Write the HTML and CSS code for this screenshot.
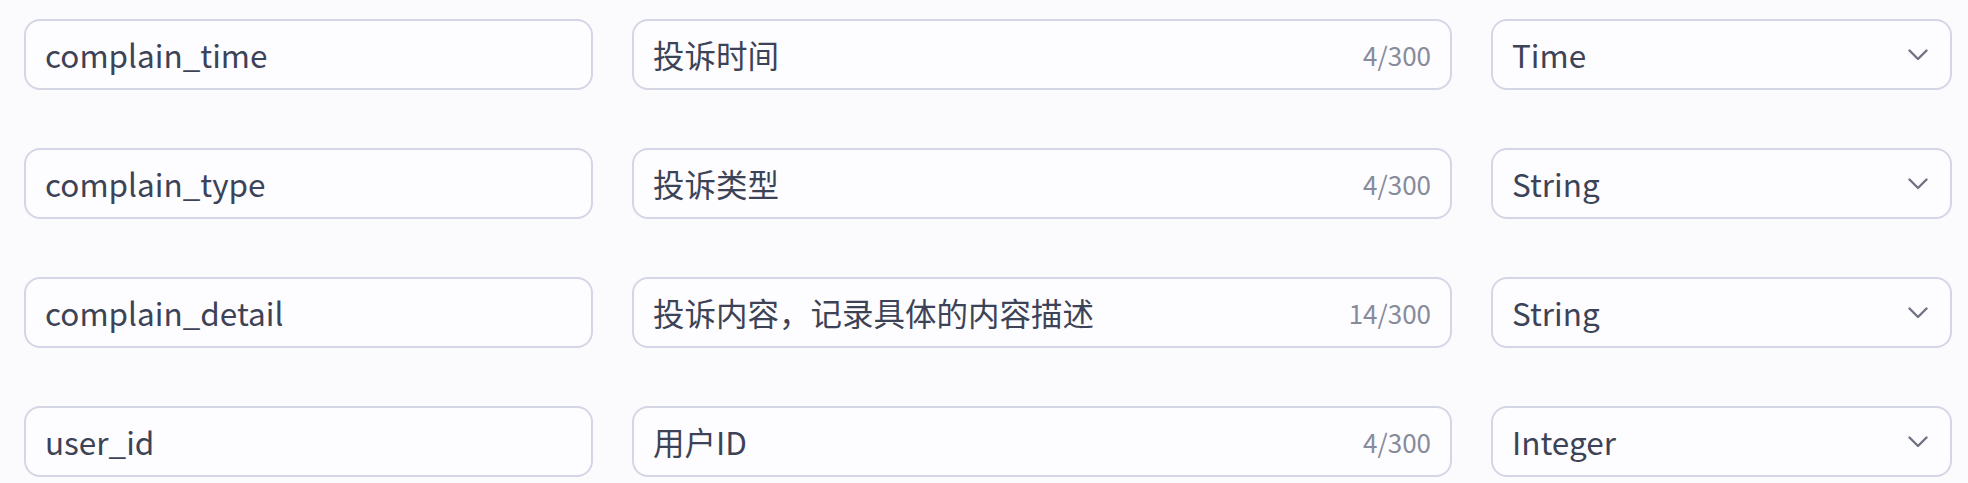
FILE: index.html
```html
<!DOCTYPE html>
<html lang="zh-CN">
<head>
<meta charset="utf-8">
<title>字段</title>
<link rel="stylesheet" href="styles.css">
</head>
<body>
<div class="list">
  <div class="row">
    <div class="field"><span class="val">complain_time</span></div>
    <div class="field"><span class="val">投诉时间</span><span class="count">4/300</span></div>
    <div class="field select"><span class="val">Time</span><svg class="chev" width="20" height="12" viewBox="0 0 20 12"><path d="M1.5 1.5 L10 10 L18.5 1.5" fill="none" stroke="#6f7382" stroke-width="2.4" stroke-linecap="round" stroke-linejoin="round"/></svg></div>
  </div>
  <div class="row">
    <div class="field"><span class="val">complain_type</span></div>
    <div class="field"><span class="val">投诉类型</span><span class="count">4/300</span></div>
    <div class="field select"><span class="val">String</span><svg class="chev" width="20" height="12" viewBox="0 0 20 12"><path d="M1.5 1.5 L10 10 L18.5 1.5" fill="none" stroke="#6f7382" stroke-width="2.4" stroke-linecap="round" stroke-linejoin="round"/></svg></div>
  </div>
  <div class="row">
    <div class="field"><span class="val">complain_detail</span></div>
    <div class="field"><span class="val">投诉内容，记录具体的内容描述</span><span class="count">14/300</span></div>
    <div class="field select"><span class="val">String</span><svg class="chev" width="20" height="12" viewBox="0 0 20 12"><path d="M1.5 1.5 L10 10 L18.5 1.5" fill="none" stroke="#6f7382" stroke-width="2.4" stroke-linecap="round" stroke-linejoin="round"/></svg></div>
  </div>
  <div class="row">
    <div class="field"><span class="val">user_id</span></div>
    <div class="field"><span class="val">用户ID</span><span class="count">4/300</span></div>
    <div class="field select"><span class="val">Integer</span><svg class="chev" width="20" height="12" viewBox="0 0 20 12"><path d="M1.5 1.5 L10 10 L18.5 1.5" fill="none" stroke="#6f7382" stroke-width="2.4" stroke-linecap="round" stroke-linejoin="round"/></svg></div>
  </div>
</div>
</body>
</html>
```
FILE: styles.css
```css
html, body {
  margin: 0;
  padding: 0;
  background: #fbfbfe;
}
body {
  font-family: "Noto Sans CJK SC", "Noto Sans", sans-serif;
  color: #3d4357;
}
.list {
  padding: 19px 16px 0 24px;
  display: flex;
  flex-direction: column;
  gap: 58px;
}
.row {
  display: grid;
  grid-template-columns: 569px 820px 461px;
  column-gap: 39px;
}
.field {
  box-sizing: border-box;
  height: 71px;
  border: 2px solid #d4d6e5;
  border-radius: 16px;
  background: #fdfdff;
  display: flex;
  align-items: center;
  justify-content: space-between;
  padding: 1px 19px 0;
}
.val {
  font-size: 31.5px;
  line-height: 1;
  white-space: nowrap;
}
.count {
  font-size: 26px;
  color: #878b9a;
  line-height: 1;
}
.select {
  padding-right: 22px;
}
.chev {
  display: block;
}
```
